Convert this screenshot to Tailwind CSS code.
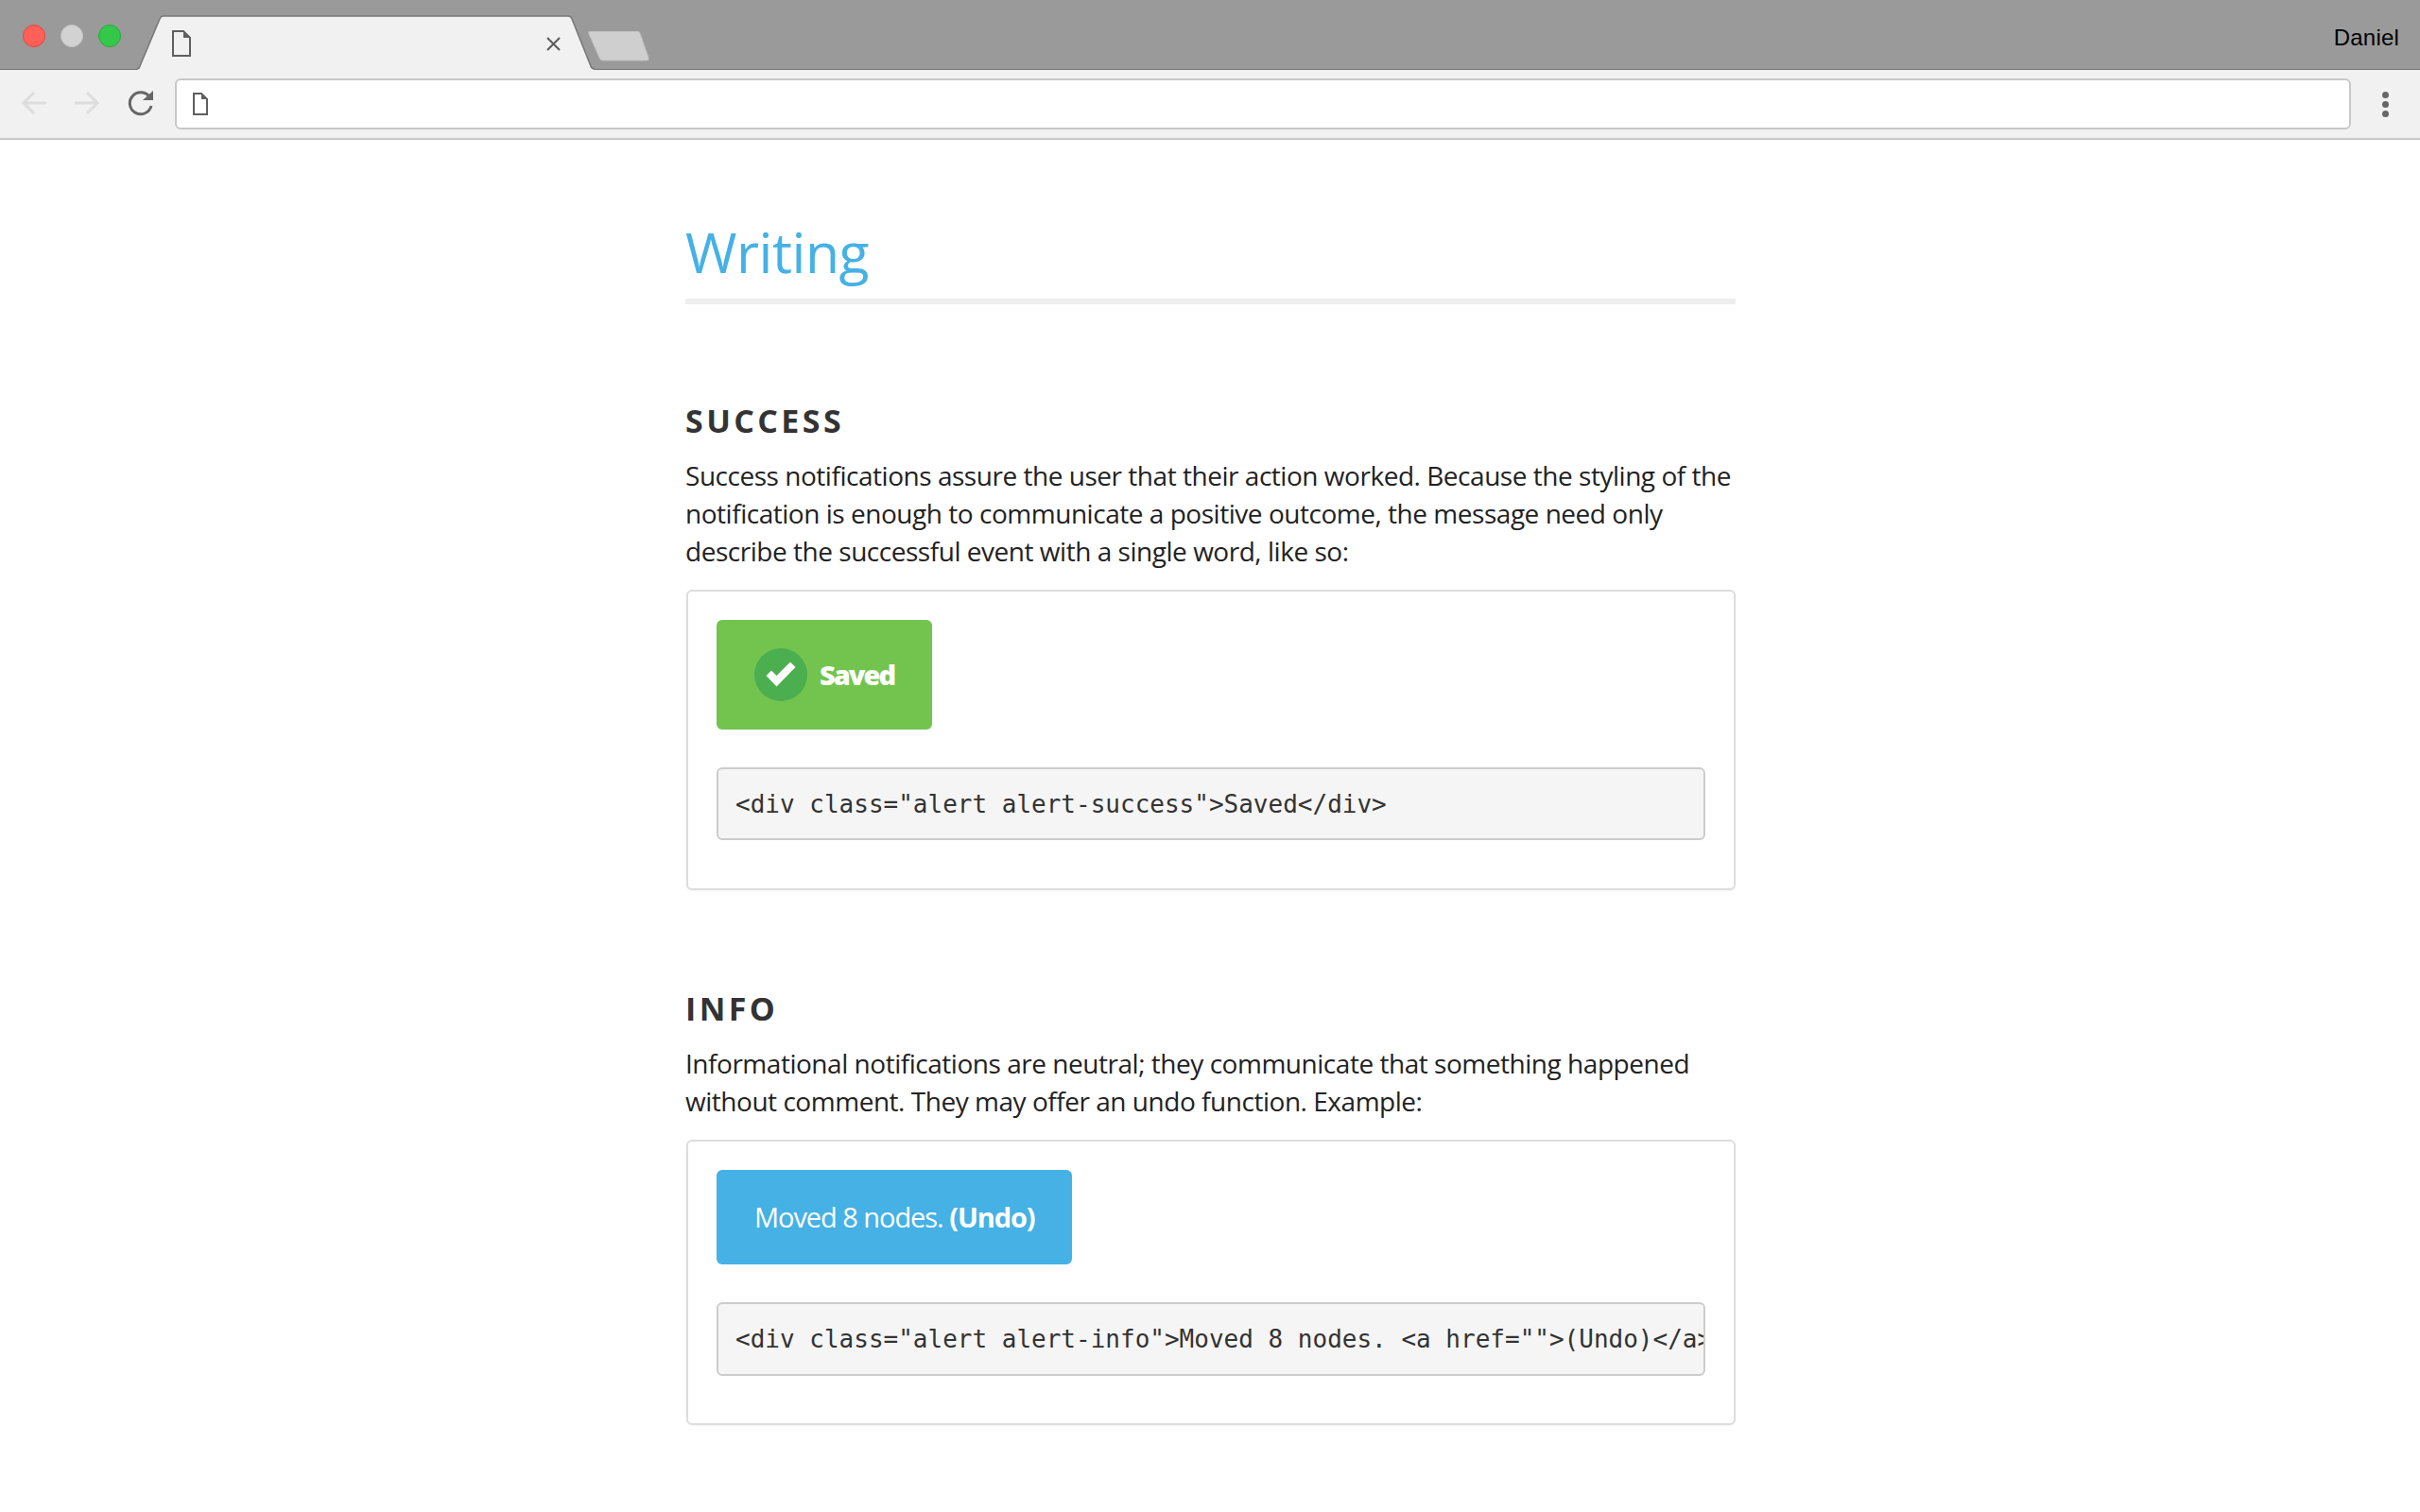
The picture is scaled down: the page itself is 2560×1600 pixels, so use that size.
<!DOCTYPE html>
<html lang="en">

<head>
    <meta charset="UTF-8">
    <title>Writing</title>
    <script src="https://cdn.jsdelivr.net/npm/@tailwindcss/browser@4"></script>
</head>

<body class="bg-white min-h-screen overflow-hidden font-['Open_Sans',sans-serif]">

    <!-- Tab strip -->
    <div class="h-[74px] bg-[#9a9a9a] border-b border-[#777777] flex items-start relative">
        <div class="flex gap-[16px] pl-[24px] pt-[26px] w-[145px] shrink-0">
            <span class="w-[24px] h-[24px] rounded-full bg-[#ff6058] border border-[#e2463f]"></span>
            <span class="w-[24px] h-[24px] rounded-full bg-[#d2d2d2] border border-[#c4c4c4]"></span>
            <span class="w-[24px] h-[24px] rounded-full bg-[#34c84a] border border-[#2aa83c]"></span>
        </div>

        <!-- Active tab -->
        <div class="relative w-[484px] h-[74px] shrink-0">
            <svg class="absolute inset-0" width="484" height="74" viewBox="0 0 484 74">
                <path d="M0 74 L2 72 L24 20 Q25 17 28 17 L456 17 Q459 17 460 20 L480 71 L484 74 Z" fill="#f1f1f1" />
                <path d="M0 73 Q2 73 3 70 L24 20 Q25 17 28 17 L456 17 Q459 17 460 20 L480 70 Q481 73 484 73" fill="none" stroke="#777777" stroke-width="1.5" />
            </svg>
            <svg class="absolute left-[37px] top-[32px]" width="20" height="28" viewBox="0 0 20 28" fill="none">
                <path d="M1 1 H12 L19 8 V27 H1 Z" stroke="#5f5f5f" stroke-width="2" />
                <path d="M12 1 V8 H19 Z" fill="#5f5f5f" />
            </svg>
            <svg class="absolute left-[433px] top-[39px]" width="15" height="15" viewBox="0 0 15 15" fill="none">
                <path d="M1 1 L14 14 M14 1 L1 14" stroke="#5a5a5a" stroke-width="2" />
            </svg>
        </div>

        <!-- New tab button -->
        <svg class="-ml-[7px] mt-[33px] shrink-0" width="65" height="32" viewBox="0 0 65 32">
            <path d="M2 0 H52 Q54 0 55 2 L64 28 Q65 31 62 31 H16 Q13 31 12 28 L1 3 Q0 0 2 0 Z" fill="#cfcfcf" stroke="#bdbdbd" stroke-width="1" />
        </svg>

        <span class="ml-auto mr-[22px] mt-[22px] text-[24px] leading-[36px] tracking-[0.2px] text-black font-['Liberation_Sans',sans-serif]">Daniel</span>
    </div>

    <!-- Toolbar -->
    <div class="h-[74px] bg-[#f1f1f1] border-b-2 border-[#c8c8c8] flex items-start">
        <div class="flex w-[185px] shrink-0">
            <svg class="ml-[22px] mt-[22px]" width="28" height="26" viewBox="0 0 28 26" fill="none">
                <path d="M27 13 H3 M14 2 L3 13 L14 24" stroke="#dddddd" stroke-width="3" />
            </svg>
            <svg class="ml-[28px] mt-[22px]" width="28" height="26" viewBox="0 0 28 26" fill="none">
                <path d="M1 13 H25 M14 2 L25 13 L14 24" stroke="#dddddd" stroke-width="3" />
            </svg>
            <svg class="ml-[28px] mt-[22px]" width="30" height="28" viewBox="0 0 30 28" fill="none">
                <path d="M24.5 7 A11.5 11.5 0 1 0 26 16" stroke="#666666" stroke-width="3" />
                <path d="M17 10 L28 0 V10 Z" fill="#666666" />
            </svg>
        </div>
        <div class="w-[2302px] h-[54px] mt-[9px] bg-white border-2 border-[#c8c8c8] rounded-[6px] flex items-center pl-[17px] shrink-0">
            <svg width="16" height="24" viewBox="0 0 16 24" fill="none">
                <path d="M1 1 H9 L15 7 V23 H1 Z" stroke="#5f5f5f" stroke-width="2" />
                <path d="M9 1 V7 H15 Z" fill="#5f5f5f" />
            </svg>
        </div>
        <div class="flex flex-col gap-[3px] ml-[33px] mt-[23px]">
            <span class="w-[7px] h-[7px] rounded-full bg-[#666666]"></span>
            <span class="w-[7px] h-[7px] rounded-full bg-[#666666]"></span>
            <span class="w-[7px] h-[7px] rounded-full bg-[#666666]"></span>
        </div>
    </div>

    <!-- Page content -->
    <main class="w-[1111px] ml-[725px] pt-[78px]">
        <h1 class="text-[59px] leading-[80px] tracking-[-0.5px] text-[#45b1e5] border-b-[6px] border-[#eeeeee] pb-[10px]">Writing</h1>

        <!-- Success -->
        <section class="mt-[100px]">
            <h2 class="text-[34px] leading-[46px] font-bold tracking-[3.4px] text-[#333333]">SUCCESS</h2>
            <p class="mt-[15px] text-[28px] leading-[40px] tracking-[-0.47px] text-[#222222]">Success notifications assure the user that their action worked. Because the styling of the notification is enough to communicate a positive outcome, the message need only describe the successful event with a single word, like so:</p>

            <div class="mt-[21px] ml-[1px] border-2 border-[#dddddd] rounded-[6px] pt-[30px] px-[30px] pb-[51px] shadow-[0_1px_2px_rgba(0,0,0,0.05)]">
                <div class="w-[228px] h-[116px] bg-[#72c44f] rounded-[6px] flex items-center pl-[40px] gap-[13px]">
                    <span class="w-[56px] h-[56px] rounded-full bg-[#4bae4f] flex items-center justify-center">
                        <svg class="mt-[-1px]" width="32" height="27" viewBox="0 0 32 27">
                            <path d="M0.5 15 L6 9.5 L11.5 15 L26 0.5 L31.5 6 L11.5 26.5 Z" fill="#ffffff" />
                        </svg>
                    </span>
                    <span class="text-[29px] font-extrabold tracking-[-2px] text-white">Saved</span>
                </div>
                <pre class="mt-[40px] h-[77px] bg-[#f5f5f5] border-2 border-[#cccccc] rounded-[6px] px-[18px] leading-[75px] text-[26px] text-[#333333] overflow-hidden font-['DejaVu_Sans_Mono',monospace]">&lt;div class="alert alert-success"&gt;Saved&lt;/div&gt;</pre>
            </div>
        </section>

        <!-- Info -->
        <section class="mt-[102px]">
            <h2 class="text-[34px] leading-[46px] font-bold tracking-[3.4px] text-[#333333]">INFO</h2>
            <p class="mt-[15px] text-[28px] leading-[40px] tracking-[-0.47px] text-[#222222]">Informational notifications are neutral; they communicate that something happened without comment. They may offer an undo function. Example:</p>

            <div class="mt-[21px] ml-[1px] border-2 border-[#dddddd] rounded-[6px] pt-[30px] px-[30px] pb-[50px] shadow-[0_1px_2px_rgba(0,0,0,0.05)]">
                <div class="w-[376px] h-[100px] bg-[#45b1e5] rounded-[6px] flex items-center pl-[40px] text-[29px] tracking-[-1.05px] text-white">
                    <span>Moved 8 nodes. <b class="tracking-[-1.1px]">(Undo)</b></span>
                </div>
                <pre class="mt-[40px] h-[78px] bg-[#f5f5f5] border-2 border-[#cccccc] rounded-[6px] pl-[18px] leading-[74px] text-[26px] text-[#333333] overflow-hidden font-['DejaVu_Sans_Mono',monospace]">&lt;div class="alert alert-info"&gt;Moved 8 nodes. &lt;a href=""&gt;(Undo)&lt;/a&gt;&lt;/div&gt;</pre>
            </div>
        </section>
    </main>
</body>

</html>
